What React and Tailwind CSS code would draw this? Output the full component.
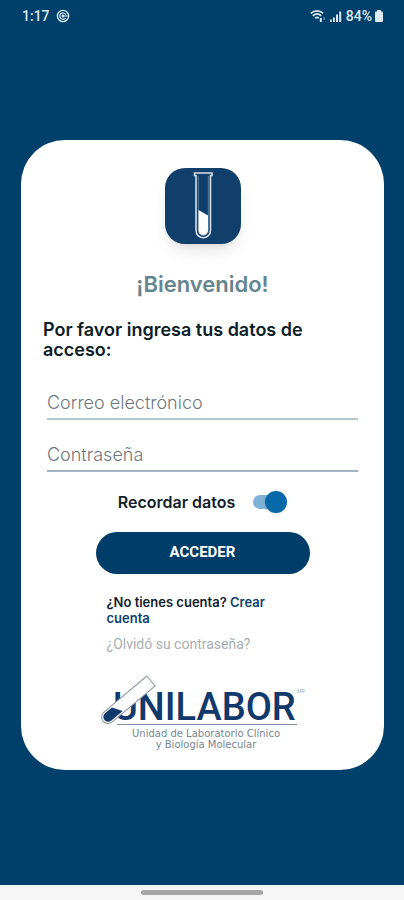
import { useState } from 'react';

function BarraEstado() {
  return (
    <header className="flex items-center justify-between pl-[22px] pr-5 h-8 text-[#dbe9f3] font-['Roboto',sans-serif] text-sm font-medium">
      <div className="flex items-center gap-1.5">
        <span>1:17</span>
        <svg className="w-3.5 h-3.5" viewBox="0 0 14 14" fill="none" stroke="currentColor">
          <circle cx="7" cy="7" r="5.6" strokeWidth="1.4" />
          <path d="M9.8 5.6A3.2 3.2 0 1 0 9.6 9" strokeWidth="1.2" />
          <circle cx="7" cy="7" r="1.5" fill="currentColor" stroke="none" />
          <path d="M8.5 7h3" strokeWidth="1.2" />
        </svg>
      </div>
      <div className="flex items-center">
        <svg className="w-4 h-3.5" viewBox="0 0 16 14" fill="none" stroke="currentColor" strokeWidth="1.7">
          <path d="M0.8 4.4C4.3 1 9.7 1 13.2 4.4" />
          <path d="M2.8 6.8c2.5-2.3 5.9-2.3 8.4 0" />
          <path d="M5 9.2c1.3-1.2 2.7-1.2 4 0" />
          <path d="M10.8 9v4" strokeWidth="2" />
          <path d="M14.2 8v3" strokeWidth="1" opacity="0.6" />
        </svg>
        <svg className="w-3 h-3 ml-1 mr-1" viewBox="0 0 12 12" fill="currentColor">
          <path d="M0 9.5h1.8V12H0zM3 7.5h1.8V12H3zM6 4.5h2V12H6zM9.2 1.5h2V12h-2z" />
        </svg>
        <span>84%</span>
        <svg className="w-2.5 h-3 ml-0.5" viewBox="0 0 10 12" fill="currentColor">
          <rect x="3" width="4" height="3" />
          <rect x="1" y="1.5" width="8" height="10.5" rx="1" />
        </svg>
      </div>
    </header>
  );
}

function IconoApp() {
  return (
    <div className="w-[76px] h-[76px] rounded-[20px] bg-[#103f6b] shadow-lg shadow-black/10">
      <svg className="w-full h-full" viewBox="0 0 76 76" fill="none">
        {/* Tubo de ensayo */}
        <path d="M29.5 5h17.5v2.5h-1.5V62.5a7.2 7.2 0 0 1-14.5 0V7.5h-1.5z" stroke="#d5e0ea" strokeWidth="1.6" />
        <path d="M33.3 8v54.5a5 5 0 0 0 10 0V8" stroke="#6f8eac" strokeWidth="0.8" />
        <path d="M33.5 42l9.5 5.5v15a4.7 4.7 0 0 1-9.5 0z" fill="#fff" />
      </svg>
    </div>
  );
}

function LogoUnilabor() {
  return (
    <svg className="w-52 h-[78px]" viewBox="0 0 208 78" role="img" aria-label="Unilabor">
      <text x="14" y="46" fill="#12396b" fontFamily="Roboto, sans-serif" fontSize="38" fontWeight="500">UNILABOR</text>
      <text x="198" y="19" fill="#9aa8b8" fontFamily="Liberation Sans, sans-serif" fontSize="5">MR</text>
      {/* Tubo inclinado sobre la U */}
      <g transform="translate(52 7) rotate(50)">
        <path d="M-6.5 0h13v56a6.5 6.5 0 0 1-13 0z" fill="#fff" stroke="#8995a5" strokeWidth="1" />
        <path d="M-4.8 47l9.6-6v15a4.8 4.8 0 0 1-9.6 0z" fill="#12396b" />
      </g>
      <path d="M18 50.5h180" stroke="#7e90a6" strokeWidth="1" />
      <text x="107" y="63" textAnchor="middle" fill="#778592" fontFamily="DejaVu Sans, sans-serif" fontSize="10">Unidad de Laboratorio Clínico</text>
      <text x="107" y="74" textAnchor="middle" fill="#778592" fontFamily="DejaVu Sans, sans-serif" fontSize="10">y Biología Molecular</text>
    </svg>
  );
}

export default function App() {
  const [recordar, setRecordar] = useState(true);

  return (
    <div className="min-h-screen flex flex-col bg-[#00406a] font-['Inter',sans-serif]">
      <BarraEstado />

      <main className="flex-1 flex flex-col justify-center pl-[21px] pr-5 pb-2">
        <form
          className="flex flex-col items-center rounded-[44px] bg-white px-[22px] pt-7 pb-[18px]"
          onSubmit={(e) => e.preventDefault()}
        >
          <IconoApp />
          <h1 className="mt-6 text-[22px] leading-8 font-semibold text-[#66858f]">¡Bienvenido!</h1>
          <p className="mt-5 w-full pr-8 text-lg leading-5 font-semibold text-[#0d1c26]">
            Por favor ingresa tus datos de acceso:
          </p>

          <div className="mt-5 w-full px-1 flex flex-col gap-3">
            <input
              type="email"
              aria-label="Correo electrónico"
              placeholder="Correo electrónico"
              className="w-full h-10 pt-2 border-b-2 border-[#b3c7cc] text-lg font-light placeholder:text-[#6c7780] outline-none"
            />
            <input
              type="password"
              aria-label="Contraseña"
              placeholder="Contraseña"
              className="w-full h-10 pt-2 border-b-2 border-[#a5b4c4] text-lg font-light placeholder:text-[#6c7780] outline-none"
            />
          </div>

          <label className="mt-4 flex items-center gap-[18px] text-base leading-7 font-semibold text-[#13202b]">
            Recordar datos
            <span className="relative flex items-center w-[34px] h-[22px]">
              <input
                type="checkbox"
                checked={recordar}
                onChange={(e) => setRecordar(e.target.checked)}
                className="peer appearance-none w-8 h-3.5 rounded-full bg-gray-300 checked:bg-[#7fb0d8]"
              />
              <span className="absolute left-0 w-[22px] h-[22px] rounded-full bg-gray-100 shadow peer-checked:left-3 peer-checked:bg-[#0869a8] pointer-events-none" />
            </span>
          </label>

          <button
            type="submit"
            className="mt-4 w-[214px] h-[42px] rounded-full bg-[#003d68] text-white font-['Roboto',sans-serif] text-[15px] font-bold"
          >
            ACCEDER
          </button>

          <div className="mt-5 w-48 flex flex-col items-start gap-2">
            <p className="text-[13px] leading-4 font-semibold text-[#13202b]">
              ¿No tienes cuenta? <a href="#crear" className="text-[#0e3f69]">Crear cuenta</a>
            </p>
            <a href="#recuperar" className="font-['Roboto',sans-serif] text-sm leading-5 text-[#a9aeb2]">
              ¿Olvidó su contraseña?
            </a>
          </div>

          <div className="mt-5">
            <LogoUnilabor />
          </div>
        </form>
      </main>

      <footer className="h-[15px] flex items-center justify-center bg-[#f6f6f6]">
        <div className="w-[30%] h-[5px] rounded-full bg-[#a5a5a5]" />
      </footer>
    </div>
  );
}
